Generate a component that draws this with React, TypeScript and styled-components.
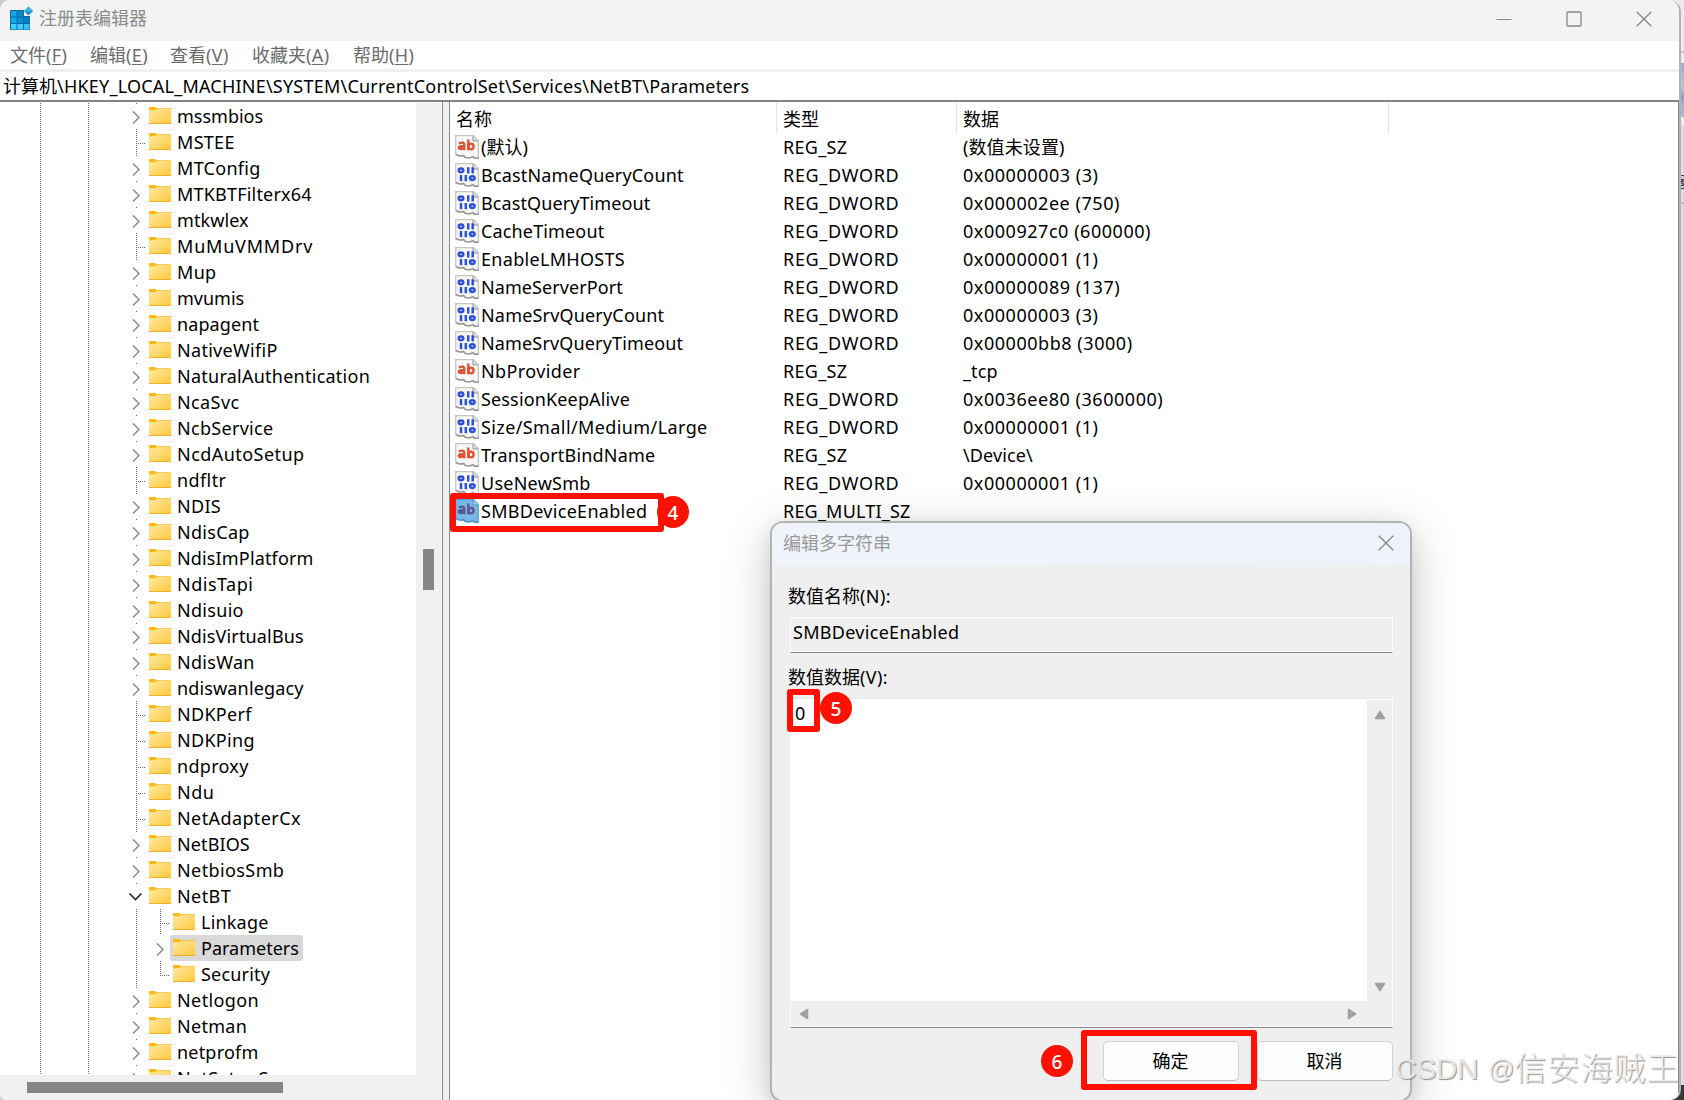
import React from "react";
import styled, { createGlobalStyle, css } from "styled-components";

const Global = createGlobalStyle`
  * { box-sizing: border-box; }
  html, body { margin: 0; padding: 0; }
  body {
    width: 1684px; height: 1100px; overflow: hidden; background: #e0e0e0;
    font-family: "Noto Sans", "Noto Sans CJK SC", sans-serif;
    font-size: 18px; line-height: 26px; color: #000; white-space: nowrap;
  }
`;

const Desktop = styled.div`
  position: relative;
  display: flex;
  width: 1684px;
  height: 1100px;
  overflow: hidden;
  background: #c9cacb;
`;
const Behind = styled.div`
  flex: 1;
  min-width: 0;
  display: flex;
  flex-direction: column;
  margin-left: -12px;
  background: #dedede;
`;
const BehindPart = styled.div<{ $h: number; $bg: string; $line?: boolean }>`
  height: ${(p) => p.$h}px;
  background: ${(p) => p.$bg};
  border-bottom: ${(p) => (p.$line ? "2px solid #c4c4c4" : "0")};
  overflow: hidden;
  padding-left: 12px;
  font-size: 16px;
  line-height: 22px;
  color: #4b4058;
`;
const Clipped = styled.span`
  display: inline-block;
  margin-left: -10px;
`;
const Window = styled.div`
  position: relative;
  z-index: 1;
  display: flex;
  flex-direction: column;
  flex: none;
  width: 1681px;
  height: 1100px;
  border-right: 2px solid #b4b4b6;
  border-radius: 10px 12px 10px 6px;
  background: #fff;
  overflow: hidden;
`;
const TitleBar = styled.div`
  display: flex;
  align-items: center;
  height: 41px;
  flex: none;
  padding: 0 27px 4px 10px;
  background: #f3f3f3;
  color: #8c8c8c;
`;
const Title = styled.span`
  flex: 1;
  margin: -1px 0 0 5px;
`;
const Controls = styled.div`
  display: flex;
  align-items: center;
  gap: 54px;
`;
const MenuBar = styled.div`
  display: flex;
  gap: 23px;
  height: 28px;
  flex: none;
  padding: 1px 10px;
  color: #6b6b6b;
`;
const MenuItem = styled.span<{ $w: number }>`
  width: ${(p) => p.$w}px;
  u { text-underline-offset: 2px; text-decoration-thickness: 1px; }
`;
const Hotkey = styled.span`
  letter-spacing: 0.4px;
`;
const AddressBar = styled.div`
  display: flex;
  height: 33px;
  flex: none;
  padding: 1px 3px 0;
  border-top: 3px solid #f0f0f0;
  border-bottom: 2px solid #828389;
`;
const Latin = styled.span<{ $ls?: number }>`
  letter-spacing: ${(p) => p.$ls ?? 0.3}px;
`;
const Panes = styled.div`
  display: flex;
  flex: 1;
  min-height: 0;
`;
const TreePane = styled.div`
  display: flex;
  width: 443px;
  flex: none;
  border-right: 1px solid #828790;
`;
const TreeColumn = styled.div`
  display: flex;
  flex-direction: column;
  width: 416px;
`;
const TreeView = styled.div`
  flex: 1;
  min-height: 0;
  overflow: hidden;
  padding-top: 1px;
`;
const HScroll = styled.div`
  display: flex;
  align-items: center;
  height: 25px;
  flex: none;
  padding: 0 0 0 27px;
  margin-right: -9px;
  background: #f0f0f0;
`;
const HThumb = styled.div`
  width: 256px;
  height: 11px;
  margin-top: -1px;
  background: #868686;
`;
const VScroll = styled.div`
  width: 25px;
  margin-top: 1px;
  padding: 446px 0 0 7px;
  background: #f0f0f0;
`;
const VThumb = styled.div`
  width: 11px;
  height: 41px;
  background: #868686;
`;
const Splitter = styled.div`
  width: 7px;
  flex: none;
  background: #f0f0f0;
  border-right: 1px solid #828790;
`;

const dots = css`
  background-image: repeating-linear-gradient(to bottom, #6a6a6a 0 1px, transparent 1px 2px);
  background-repeat: no-repeat;
`;
const TreeRow = styled.div`
  display: flex;
  height: 26px;
  padding-left: 28px;
`;
const Guide = styled.span<{ $w: number; $len: number }>`
  width: ${(p) => p.$w}px;
  flex: none;
  ${dots}
  background-size: 1px ${(p) => p.$len}px;
  background-position: 12px 0;
`;
const Joint = styled.span<{ $len: number }>`
  display: flex;
  width: 22px;
  flex: none;
  ${dots}
  background-size: 1px ${(p) => p.$len}px;
  background-position: 12px 0;
`;
const Branch = styled.span`
  width: 10px;
  height: 1px;
  margin: 14px 0 0 12px;
  background: repeating-linear-gradient(to right, #6a6a6a 0 1px, transparent 1px 2px);
`;
const Node = styled.span<{ $selected?: boolean }>`
  display: flex;
  height: 26px;
  padding: 0 4px 0 3px;
  border-radius: 2px;
  background: ${(p) => (p.$selected ? "#d9d9d9" : "transparent")};
`;
const NodeLabel = styled(Latin)`
  margin-left: 6px;
`;

const ListPane = styled.div`
  flex: 1;
  display: flex;
  flex-direction: column;
  border-right: 1px solid #828790;
`;
const columns = "327px 180px 432px";
const ListHeader = styled.div`
  display: grid;
  grid-template-columns: ${columns};
  height: 31px;
`;
const HeaderCell = styled.span`
  padding: 4px 0 0 6px;
  border-right: 1px solid #e3e3e3;
`;
const ValueRow = styled.div`
  display: grid;
  grid-template-columns: ${columns};
  height: 28px;
  line-height: 28px;
`;
const NameCell = styled.span`
  display: flex;
  padding: 2px 0 0 5px;
  line-height: 24px;
`;
const NameText = styled(Latin)`
  margin-left: 2px;
`;
const Cell = styled(Latin)`
  padding-left: 6px;
`;

const Dialog = styled.div`
  position: absolute;
  left: 770px;
  top: 521px;
  z-index: 2;
  display: flex;
  flex-direction: column;
  width: 642px;
  height: 581px;
  border: 2px solid #b3b3b3;
  border-radius: 13px;
  background: #efefef;
  box-shadow: 0 12px 48px rgba(0, 0, 0, 0.22), 0 4px 16px rgba(0, 0, 0, 0.08);
  overflow: hidden;
`;
const DialogTitle = styled.div`
  display: flex;
  align-items: center;
  justify-content: space-between;
  height: 43px;
  flex: none;
  padding: 0 16px 3px 11px;
  background: linear-gradient(100deg, #f0f3fa, #eef3fb 45%, #edf3f8 75%, #eef2fc);
  color: #999;
`;
const DialogBody = styled.div`
  flex: 1;
  display: flex;
  flex-direction: column;
  padding: 0 17px 0 18px;
`;
const Label = styled.label<{ $top: number; $h: number }>`
  height: ${(p) => p.$h}px;
  padding-top: ${(p) => p.$top}px;
  margin-left: -2px;
`;
const ReadonlyField = styled.div`
  height: 36px;
  flex: none;
  padding: 1px 2px;
  border: 1px solid #fff;
  border-bottom: 1px solid #868686;
  box-shadow: 0 -1px #e8e8e8, 1px 0 #e8e8e8, inset 0 -1px #fff;
`;
const TextArea = styled.div`
  display: grid;
  grid-template: 1fr 26px / 1fr 25px;
  height: 329px;
  flex: none;
  border: 1px solid #fff;
  border-bottom: 1px solid #868686;
  box-shadow: 0 -1px #e8e8e8, 1px 0 #e8e8e8, inset 0 -1px #fff;
`;
const TextBody = styled.div`
  padding: 0 4px;
  background: #fff;
`;
const BarV = styled.div`
  display: flex;
  flex-direction: column;
  justify-content: space-between;
  align-items: center;
  padding: 9px 0 8px 0;
`;
const BarH = styled.div`
  display: flex;
  align-items: center;
  justify-content: space-between;
  padding: 0 9px 1px 7px;
`;
const Buttons = styled.div`
  display: flex;
  justify-content: flex-end;
  gap: 18px;
  margin-top: 13px;
`;
const Button = styled.button`
  width: 136px;
  height: 40px;
  padding: 0 1px 1px 0;
  border: 1px solid #d0d0d0;
  border-bottom-color: #bcbcbc;
  border-radius: 5px;
  background: #fdfdfd;
  font: inherit;
  color: #000;
`;

const Frame = styled.div<{ $x: number; $y: number; $w: number; $h: number }>`
  position: absolute;
  z-index: 3;
  left: ${(p) => p.$x}px;
  top: ${(p) => p.$y}px;
  width: ${(p) => p.$w}px;
  height: ${(p) => p.$h}px;
  border: 6px solid #ff1000;
  border-radius: 3px;
`;
const Step = styled.div<{ $x: number; $y: number }>`
  position: absolute;
  z-index: 4;
  left: ${(p) => p.$x}px;
  top: ${(p) => p.$y}px;
  width: 32px;
  height: 32px;
  border-radius: 50%;
  background: #ff1000;
  color: #fff;
  text-align: center;
  font-size: 19px;
  font-weight: 500;
  line-height: 34px;
`;
const Watermark = styled.div`
  position: absolute;
  z-index: 5;
  left: 1395px;
  top: 1045px;
  display: flex;
  font-family: "Liberation Sans", "Noto Sans CJK SC", sans-serif;
  font-weight: 300;
  line-height: 48px;
  color: rgba(238, 238, 238, 0.9);
  text-shadow: 1px 1px 1px rgba(110, 110, 110, 0.75);
`;
const MarkText = styled.span<{ $size: number; $ls: number; $left?: number }>`
  font-size: ${(p) => p.$size}px;
  letter-spacing: ${(p) => p.$ls}px;
  margin-left: ${(p) => p.$left ?? 0}px;
`;
const Icon = styled.svg`
  display: block;
  flex: none;
`;

const RegeditIcon = () => (
  <Icon width="24" height="25" viewBox="0 0 24 25">
    <path d="M0 4h14v6h6v14H0z" fill="#0b6cab" />
    <path d="M1 5h5.500v5.500H1z" fill="#1a9fe0" />
    <path d="M7.500 5H13v5.500H7.500z" fill="#0c86cf" />
    <path d="M1 11.500h5.500V17H1z" fill="#12a8e6" />
    <path d="M7.500 11.500H13V17H7.500z" fill="#0d8fd8" />
    <path d="M14 11.500h5.500V17H14z" fill="#0c7fc4" />
    <path d="M1 18h5.500v5.500H1zM7.500 18H13v5.500H7.500z" fill="#45cdf8" />
    <path d="M14 18h5.500v5.500H14z" fill="#38bdf0" />
    <path d="M18.500 0.500l4.500 4.500-4.500 4.500L14 5z" fill="#1c8fd2" />
    <path d="M18.500 0.500l4.500 4.500-4.500 0.500L14 5z" fill="#45b4ea" />
  </Icon>
);

const FolderIcon = ({ id }: { id: string }) => (
  <Icon width="22" height="26" viewBox="0 0 22 26">
    <defs>
      <linearGradient id={id} x1="0" y1="0" x2="1" y2="1">
        <stop offset="0" stopColor="#ffe9a4" />
        <stop offset="1" stopColor="#ffc83a" />
      </linearGradient>
    </defs>
    <path d="M0 5q0-1 1-1h5.500l1.500 1.300H22V11H0z" fill="#fbb917" />
    <path d="M0 7.200h6.500L8 6h14v15H0z" fill={`url(#${id})`} />
    <path d="M0 20h22v1H0z" fill="#eeb02c" />
  </Icon>
);

const Chevron = ({ open }: { open?: boolean }) => (
  <Icon width="22" height="26" viewBox="0 0 22 26" fill="none">
    {open ? (
      <path d="M5.500 10.500l6 6 6-6" stroke="#222" strokeWidth="1.600" />
    ) : (
      <path d="M9 8.500l6 6-6 6" stroke="#8c8c8c" strokeWidth="1.500" />
    )}
  </Icon>
);

const ValueIcon = ({ kind, selected }: { kind: string; selected?: boolean }) => (
  <Icon width="24" height="24" viewBox="0 0 24 24" fill="none">
    <path
      d="M.7.7h17.800l4.800 4.800v17.800h-4l-1.500-1.800-3 1.300-4.500-.3-2-2-4 .6L.7 19.500z"
      fill={selected ? "#76b9e8" : "#f7f7f7"}
      stroke={selected ? "#5ba4d6" : "#c6c6c6"}
      strokeWidth="1.300"
    />
    <path d="M18 1v5h5" fill={selected ? "#a5d2f2" : "#ddd"} stroke={selected ? "#4d93c5" : "#999"} />
    <path
      d="M1 19.500l3.600 1.600 4-.6 2 2 4.500.3 3-1.300 1.500 1.800h4"
      stroke={selected ? "#4c96cb" : "#959595"}
      strokeWidth="1.400"
    />
    {kind === "REG_DWORD" ? (
      <g stroke="#2f50d8" strokeWidth="2.500">
        <ellipse cx="6" cy="7.300" rx="2.300" ry="1.900" />
        <path d="M13.200 4.200v6.200M17.700 4.200v6.200M6 12v6.200M10.800 12v6.200" />
        <ellipse cx="17.300" cy="15.100" rx="2.300" ry="1.900" />
      </g>
    ) : (
      <g stroke={selected ? "#5b5a8c" : "#dd5533"} strokeWidth="2.400">
        <path d="M3.800 8.300q5.300-1.800 5.500 1.400v5.600M9 11.300q-5.300-.3-5.200 1.500c.3 2 4.300 1.400 5.200-.6" />
        <path d="M13.300 4.500v10.800" />
        <ellipse cx="16" cy="11.500" rx="2.600" ry="2.700" />
      </g>
    )}
  </Icon>
);

const CloseIcon = () => (
  <Icon width="16" height="16" viewBox="0 0 16 16">
    <path d="M.7.7l14.600 14.600M15.300.7L.7 15.300" stroke="#868686" strokeWidth="1.300" />
  </Icon>
);
const Arrow = ({ dir }: { dir: "up" | "down" | "left" | "right" }) => {
  const turn = { up: 0, right: 90, down: 180, left: 270 }[dir];
  return (
    <Icon width="12" height="12" viewBox="0 0 12 12">
      <path
        d="M6 2.500L10.500 9.500H1.500z"
        fill="#a0a0a0"
        stroke="#a0a0a0"
        strokeWidth="1.500"
        strokeLinejoin="round"
        transform={`rotate(${turn} 6 6)`}
      />
    </Icon>
  );
};

type TreeItem = { name: string; state: ">" | "-" | "v"; depth?: number; ls?: number };
const tree: TreeItem[] = [
  { name: "mssmbios", state: ">", ls: 0 },
  { name: "MSTEE", state: "-" },
  { name: "MTConfig", state: ">" },
  { name: "MTKBTFilterx64", state: ">", ls: 0.2 },
  { name: "mtkwlex", state: ">", ls: 0.1 },
  { name: "MuMuVMMDrv", state: "-", ls: 0.8 },
  { name: "Mup", state: ">" },
  { name: "mvumis", state: ">", ls: 0 },
  { name: "napagent", state: ">", ls: 0.1 },
  { name: "NativeWifiP", state: ">" },
  { name: "NaturalAuthentication", state: ">", ls: 0.25 },
  { name: "NcaSvc", state: ">", ls: 0.4 },
  { name: "NcbService", state: ">", ls: 0.3 },
  { name: "NcdAutoSetup", state: ">", ls: 0.45 },
  { name: "ndfltr", state: "-", ls: 0.4 },
  { name: "NDIS", state: ">" },
  { name: "NdisCap", state: ">" },
  { name: "NdisImPlatform", state: ">", ls: 0.15 },
  { name: "NdisTapi", state: ">", ls: 0.5 },
  { name: "Ndisuio", state: ">" },
  { name: "NdisVirtualBus", state: ">", ls: 0.15 },
  { name: "NdisWan", state: ">" },
  { name: "ndiswanlegacy", state: ">", ls: 0.15 },
  { name: "NDKPerf", state: "-" },
  { name: "NDKPing", state: "-" },
  { name: "ndproxy", state: "-" },
  { name: "Ndu", state: "-", ls: 0.5 },
  { name: "NetAdapterCx", state: "-", ls: 0.4 },
  { name: "NetBIOS", state: ">", ls: 0.1 },
  { name: "NetbiosSmb", state: ">", ls: 0.4 },
  { name: "NetBT", state: "v", ls: 0.4 },
  { name: "Linkage", state: "-", depth: 1, ls: 0.2 },
  { name: "Parameters", state: ">", depth: 1, ls: 0 },
  { name: "Security", state: "-", depth: 1, ls: 0.2 },
  { name: "Netlogon", state: ">", ls: 0.4 },
  { name: "Netman", state: ">" },
  { name: "netprofm", state: ">", ls: 0.2 },
  { name: "NetSetupSvc", state: ">" },
];

type Value = { name: string; type: string; data: string; ls: number };
const values: Value[] = [
  { name: "(默认)", type: "REG_SZ", data: "(数值未设置)", ls: 0 },
  { name: "BcastNameQueryCount", type: "REG_DWORD", data: "0x00000003 (3)", ls: 0.18 },
  { name: "BcastQueryTimeout", type: "REG_DWORD", data: "0x000002ee (750)", ls: 0.1 },
  { name: "CacheTimeout", type: "REG_DWORD", data: "0x000927c0 (600000)", ls: 0.15 },
  { name: "EnableLMHOSTS", type: "REG_DWORD", data: "0x00000001 (1)", ls: 0.3 },
  { name: "NameServerPort", type: "REG_DWORD", data: "0x00000089 (137)", ls: 0.08 },
  { name: "NameSrvQueryCount", type: "REG_DWORD", data: "0x00000003 (3)", ls: 0.18 },
  { name: "NameSrvQueryTimeout", type: "REG_DWORD", data: "0x00000bb8 (3000)", ls: 0.15 },
  { name: "NbProvider", type: "REG_SZ", data: "_tcp", ls: 0.4 },
  { name: "SessionKeepAlive", type: "REG_DWORD", data: "0x0036ee80 (3600000)", ls: 0.15 },
  { name: "Size/Small/Medium/Large", type: "REG_DWORD", data: "0x00000001 (1)", ls: 0.4 },
  { name: "TransportBindName", type: "REG_SZ", data: "\\Device\\", ls: 0.18 },
  { name: "UseNewSmb", type: "REG_DWORD", data: "0x00000001 (1)", ls: 0.25 },
  { name: "SMBDeviceEnabled", type: "REG_MULTI_SZ", data: "", ls: 0.3 },
];
const typeSpacing: Record<string, number> = { REG_SZ: 0.3, REG_DWORD: 0.68, REG_MULTI_SZ: 0.2 };

const menus: [string, string, number][] = [
  ["文件", "F", 57], ["编辑", "E", 57], ["查看", "V", 59], ["收藏夹", "A", 78], ["帮助", "H", 62],
];

const TreeEntry = ({ name, state, depth = 0, ls }: TreeItem) => {
  const last = name === "Security";
  return (
    <TreeRow>
      <Guide $w={48} $len={26} />
      <Guide $w={48} $len={26} />
      {depth > 0 && <Guide $w={24} $len={26} />}
      <Joint $len={state === "-" ? (last ? 15 : 26) : depth > 0 ? 0 : 1}>
        {state === "-" ? <Branch /> : <Chevron open={state === "v"} />}
      </Joint>
      <Node $selected={name === "Parameters"}>
        <FolderIcon id={`folder-${name}`} />
        <NodeLabel $ls={ls}>{name}</NodeLabel>
      </Node>
    </TreeRow>
  );
};

export default function App() {
  return (
    <Desktop>
      <Global />
      <Window>
        <TitleBar>
          <RegeditIcon />
          <Title>注册表编辑器</Title>
          <Controls>
            <Icon width="16" height="16" viewBox="0 0 16 16">
              <path d="M.5 8.500h15" stroke="#868686" />
            </Icon>
            <Icon width="16" height="16" viewBox="0 0 16 16">
              <rect x="1" y="1" width="14" height="14" rx="1" fill="none" stroke="#868686" strokeWidth="1.300" />
            </Icon>
            <CloseIcon />
          </Controls>
        </TitleBar>
        <MenuBar>
          {menus.map(([text, key, w]) => (
            <MenuItem key={key} $w={w}>
              {text}
              <Hotkey>
                (<u>{key}</u>)
              </Hotkey>
            </MenuItem>
          ))}
        </MenuBar>
        <AddressBar>
          计算机
          <Latin $ls={0.22}>\HKEY_LOCAL_MACHINE\SYSTEM\CurrentControlSet\Services\NetBT\Parameters</Latin>
        </AddressBar>
        <Panes>
          <TreePane>
            <TreeColumn>
              <TreeView>
                {tree.map((item) => (
                  <TreeEntry key={item.name} {...item} />
                ))}
              </TreeView>
              <HScroll>
                <HThumb />
              </HScroll>
            </TreeColumn>
            <VScroll>
              <VThumb />
            </VScroll>
          </TreePane>
          <Splitter />
          <ListPane>
            <ListHeader>
              <HeaderCell>名称</HeaderCell>
              <HeaderCell>类型</HeaderCell>
              <HeaderCell>数据</HeaderCell>
            </ListHeader>
            {values.map(({ name, type, data, ls }) => (
              <ValueRow key={name}>
                <NameCell>
                  <ValueIcon kind={type} selected={type === "REG_MULTI_SZ"} />
                  <NameText $ls={ls}>{name}</NameText>
                </NameCell>
                <Cell $ls={typeSpacing[type]}>{type}</Cell>
                <Cell $ls={data.startsWith("0x") ? 0.54 : 0.1}>{data}</Cell>
              </ValueRow>
            ))}
          </ListPane>
        </Panes>
      </Window>
      <Behind>
        <BehindPart $h={53} $bg="#ececec" $line />
        <BehindPart $h={10} $bg="#ececec" />
        <BehindPart $h={54} $bg="linear-gradient(35deg, #a9b9cc 30%, #8f9fbb 45%, #b9c8da 60%, #9aabc5)" />
        <BehindPart $h={9} $bg="#ececec" />
        <BehindPart $h={45} $bg="#dedcdc" />
        <BehindPart $h={33} $bg="#dedcdc" $line>
          <Clipped>器</Clipped>
        </BehindPart>
        <BehindPart $h={881} $bg="#dcdcdc" />
        <BehindPart $h={15} $bg="#33363a" />
      </Behind>

      <Dialog>
        <DialogTitle>
          编辑多字符串
          <CloseIcon />
        </DialogTitle>
        <DialogBody>
          <Label $top={17} $h={51}>
            数值名称<Hotkey>(N):</Hotkey>
          </Label>
          <ReadonlyField>
            <Latin>SMBDeviceEnabled</Latin>
          </ReadonlyField>
          <Label $top={11} $h={46}>
            数值数据<Hotkey>(V):</Hotkey>
          </Label>
          <TextArea>
            <TextBody>0</TextBody>
            <BarV>
              <Arrow dir="up" />
              <Arrow dir="down" />
            </BarV>
            <BarH>
              <Arrow dir="left" />
              <Arrow dir="right" />
            </BarH>
          </TextArea>
          <Buttons>
            <Button>确定</Button>
            <Button>取消</Button>
          </Buttons>
        </DialogBody>
      </Dialog>

      <Frame $x={450} $y={493} $w={214} $h={39} />
      <Step $x={657} $y={496}>4</Step>
      <Frame $x={787} $y={689} $w={33} $h={43} />
      <Step $x={820} $y={692}>5</Step>
      <Frame $x={1081} $y={1030} $w={176} $h={60} />
      <Step $x={1041} $y={1045}>6</Step>
      <Watermark>
        <MarkText $size={30} $ls={-0.5}>CSDN</MarkText>
        <MarkText $size={26} $ls={0} $left={10}>@</MarkText>
        <MarkText $size={32} $ls={1}>信安海贼王</MarkText>
      </Watermark>
    </Desktop>
  );
}
